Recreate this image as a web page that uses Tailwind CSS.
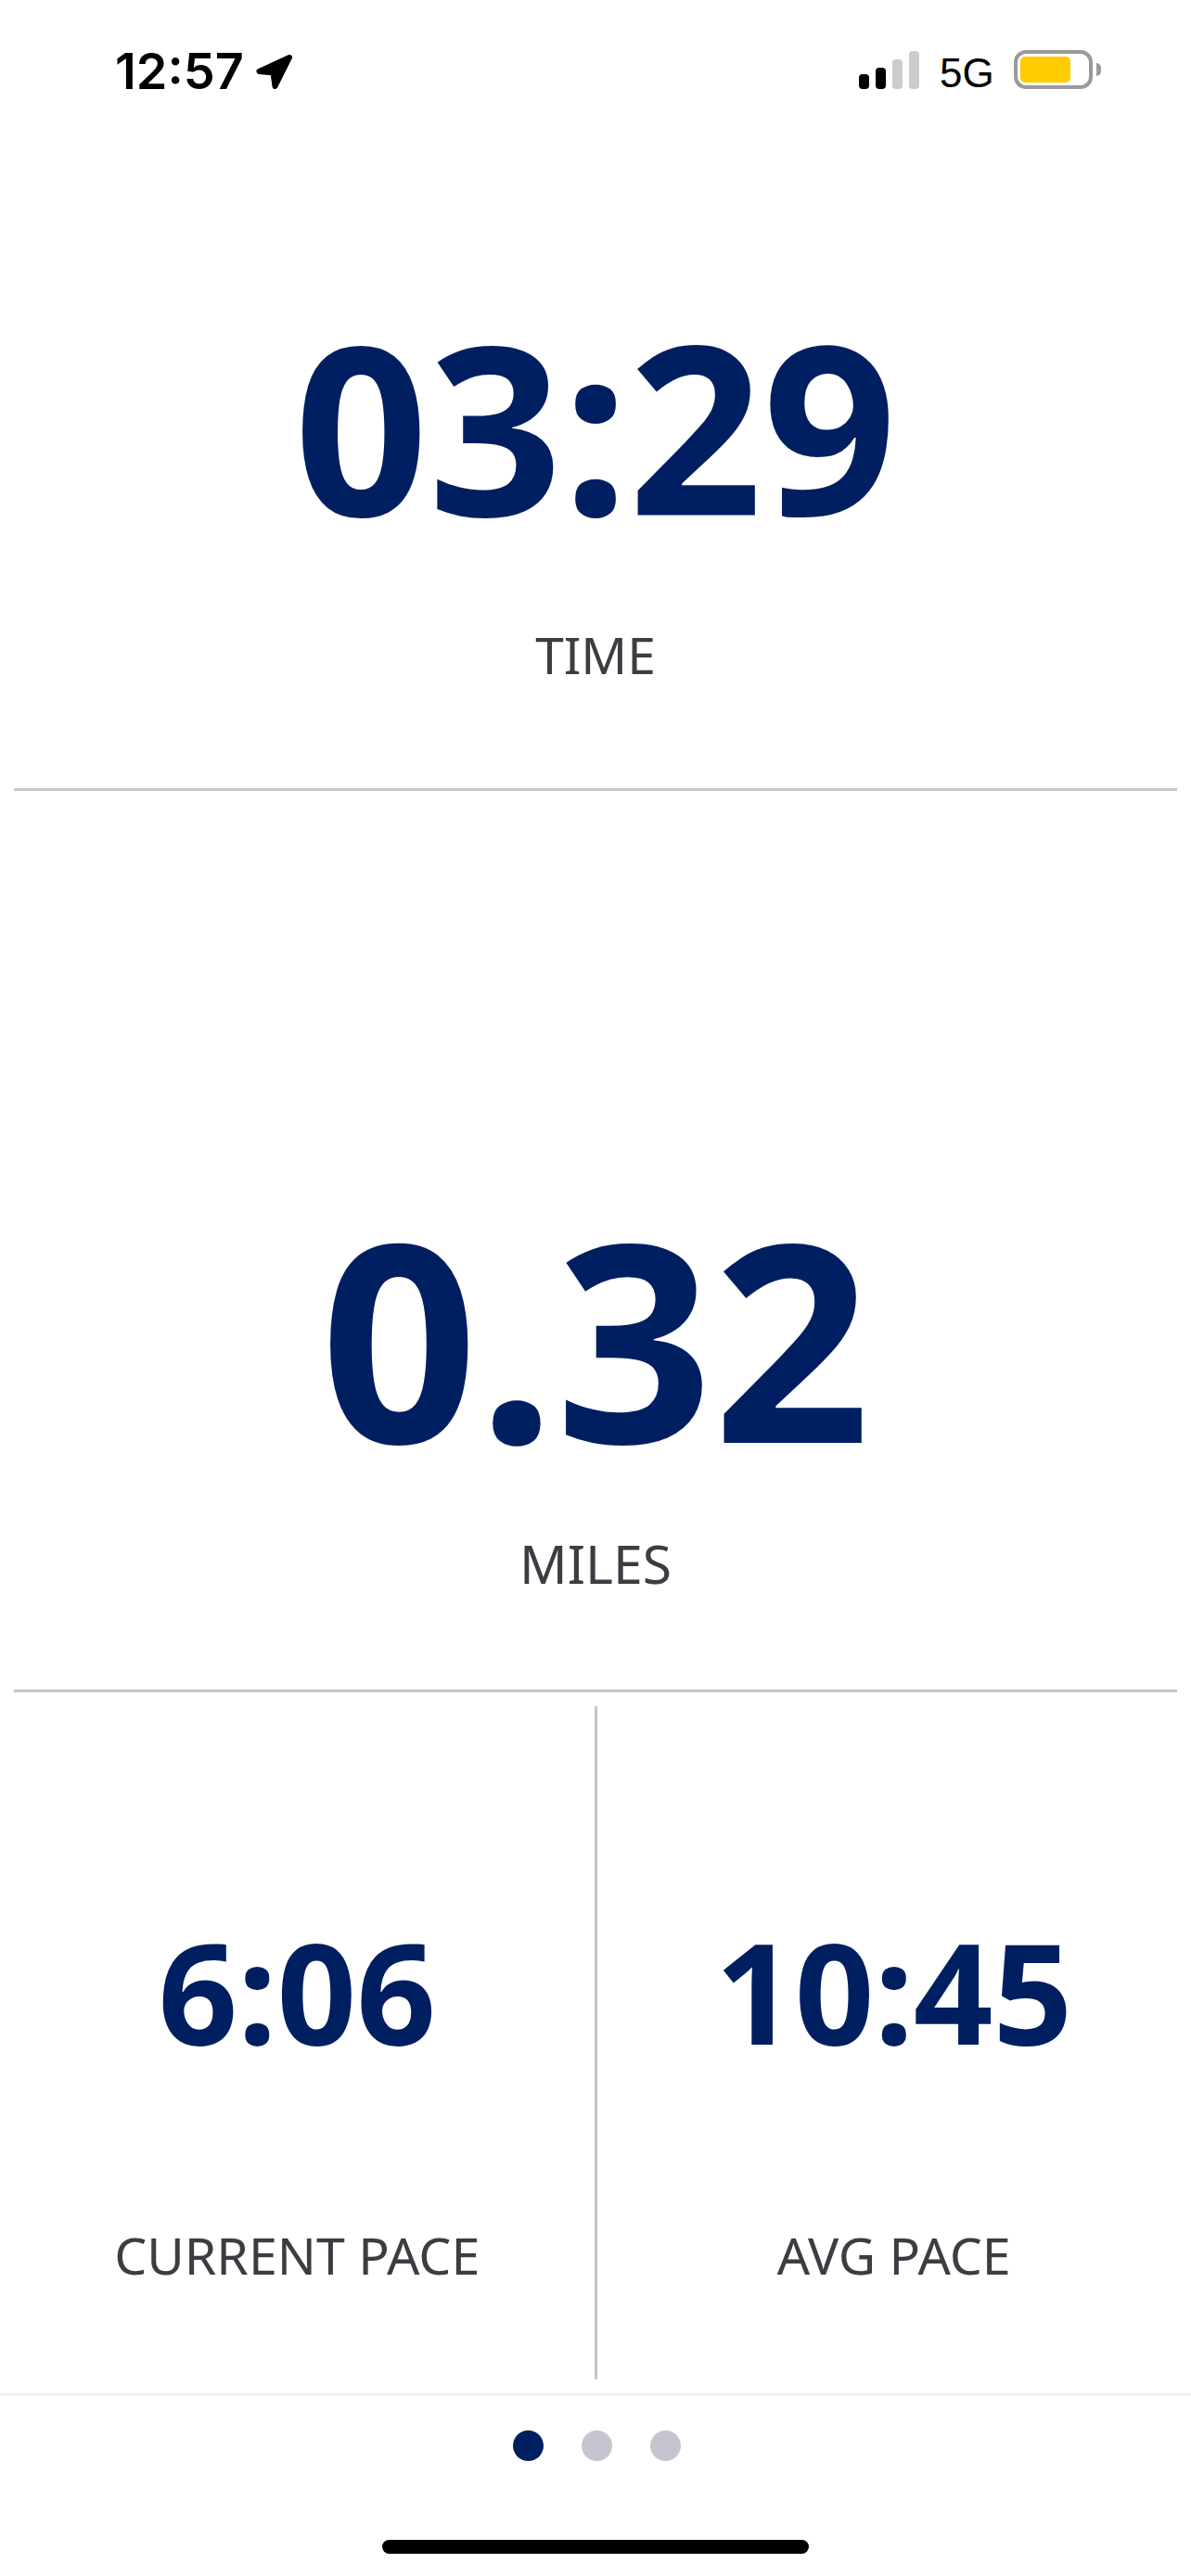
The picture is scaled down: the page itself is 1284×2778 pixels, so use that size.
<!DOCTYPE html>
<html lang="en">

<head>
  <meta charset="UTF-8" />
  <meta name="viewport" content="width=device-width, initial-scale=1.0" />
  <title>Run Stats</title>
  <script src="https://cdn.jsdelivr.net/npm/@tailwindcss/browser@4"></script>
</head>

<body class="bg-white w-[1284px] h-[2778px] overflow-hidden flex flex-col font-['Noto_Sans',sans-serif]">

  <!-- Status bar -->
  <div class="h-[90px] flex justify-between pl-[124px] pr-[97px] shrink-0">
    <div class="flex items-start pt-[50px] font-['Inter',sans-serif] font-semibold text-[54px] leading-[54px] text-black">
      <span>12:57</span>
      <svg width="42" height="40" viewBox="0 0 42 40" class="ml-[12px] mt-[7px]">
        <path d="M37 5 L4.5 20 L19.5 21.5 L21.5 36 Z" fill="#000" stroke="#000" stroke-width="6" stroke-linejoin="round" />
      </svg>
    </div>
    <div class="flex items-start pt-[54px]">
      <div class="flex items-end gap-[7px] h-[41px] mt-[1px]">
        <div class="w-[11px] h-[16px] rounded-[4px] bg-black"></div>
        <div class="w-[11px] h-[23px] rounded-[4px] bg-black"></div>
        <div class="w-[11px] h-[32px] rounded-[4px] bg-[#cccccc]"></div>
        <div class="w-[11px] h-[41px] rounded-[4px] bg-[#cccccc]"></div>
      </div>
      <span class="ml-[22px] w-[59px] font-['Liberation_Sans',sans-serif] text-[44px] leading-[50px] text-black">5G</span>
      <div class="ml-[21px] flex items-center">
        <div class="w-[85px] h-[42px] rounded-[13px] border-[4px] border-[#9a9a9a] p-[3px]">
          <div class="w-[54px] h-full rounded-[5px] bg-[#ffcc00]"></div>
        </div>
        <div class="ml-[4px] w-[5px] h-[14px] rounded-r-full bg-[#9a9a9a]"></div>
      </div>
    </div>
  </div>

  <!-- Time -->
  <div class="h-[760px] flex flex-col items-center shrink-0">
    <div class="mt-[241px] text-[253px] leading-[254px] font-bold text-[#001f60]">03:29</div>
    <div class="mt-[91px] text-[55px] leading-[60px] text-[#3c3c43]">TIME</div>
  </div>
  <div class="mx-[15px] h-[3px] bg-[#c5c5cf] shrink-0"></div>

  <!-- Miles -->
  <div class="h-[969px] flex flex-col items-center shrink-0">
    <div class="mt-[440px] text-[297px] leading-[297px] font-bold text-[#001f60]">0.32</div>
    <div class="mt-[66px] text-[57px] leading-[60px] text-[#3c3c43]">MILES</div>
  </div>
  <div class="mx-[15px] h-[3px] bg-[#c5c5cf] shrink-0"></div>

  <!-- Paces -->
  <div class="h-[756px] pt-[15px] pb-[15px] flex shrink-0">
    <div class="flex-1 flex flex-col items-center">
      <div class="mt-[232px] text-[150px] leading-[150px] font-bold text-[#001f60]">6:06</div>
      <div class="mt-[180px] text-[55.5px] leading-[60px] text-[#3c3c43]">CURRENT PACE</div>
    </div>
    <div class="w-[3px] bg-[#c5c5cf]"></div>
    <div class="flex-1 flex flex-col items-center">
      <div class="mt-[232px] text-[150px] leading-[150px] font-bold text-[#001f60]">10:45</div>
      <div class="mt-[180px] text-[55.5px] leading-[60px] text-[#3c3c43]">AVG PACE</div>
    </div>
  </div>

  <!-- Pager -->
  <div class="flex-1 border-t-[3px] border-[#eef1f5] flex flex-col items-center">
    <div class="mt-[37px] ml-[2px] flex gap-[41px]">
      <div class="w-[33px] h-[33px] rounded-full bg-[#001f60]"></div>
      <div class="w-[33px] h-[33px] rounded-full bg-[#c5c5cf]"></div>
      <div class="w-[33px] h-[33px] rounded-full bg-[#c5c5cf]"></div>
    </div>
    <div class="mt-[85px] w-[460px] h-[15px] rounded-full bg-black"></div>
  </div>

</body>

</html>
